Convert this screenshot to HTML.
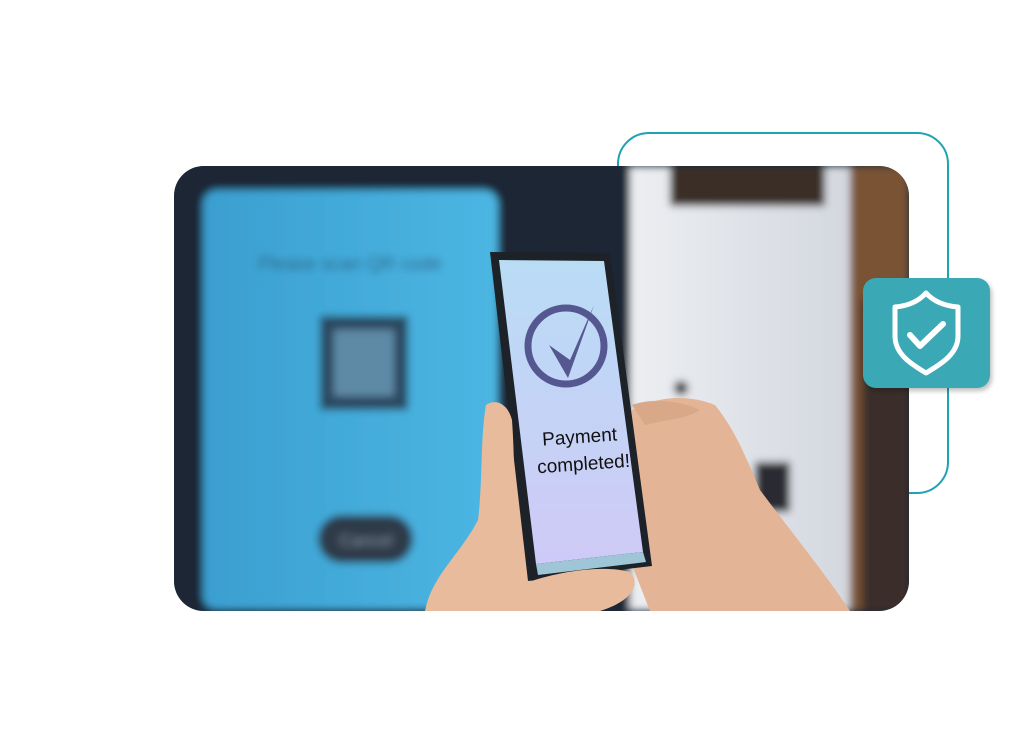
<!DOCTYPE html>
<html><head><meta charset="utf-8"><style>
html,body{margin:0;padding:0;background:#fff;width:1018px;height:743px;overflow:hidden;font-family:"Liberation Sans",sans-serif}
.outline{position:absolute;left:617px;top:132px;width:328px;height:358px;border:2px solid #1ea3b3;border-radius:32px}
.img{position:absolute;left:174px;top:166px;width:735px;height:445px;border-radius:30px;overflow:hidden}
.badge{position:absolute;left:863px;top:278px;width:127px;height:110px;background:#3aa9b5;border-radius:13px;box-shadow:2px 3px 5px rgba(0,0,0,.25)}
</style></head><body>
<div class="outline"></div>
<div class="img">
<svg width="735" height="445" viewBox="174 166 735 445" xmlns="http://www.w3.org/2000/svg">
<defs>
<filter id="b" x="-20%" y="-20%" width="140%" height="140%"><feGaussianBlur stdDeviation="4"/></filter>
<linearGradient id="scr" x1="0" y1="0" x2="0" y2="1"><stop offset="0" stop-color="#b9dcf5"/><stop offset="1" stop-color="#cfcaf7"/></linearGradient>
<linearGradient id="rt" x1="0" y1="0" x2="1" y2="0"><stop offset="0" stop-color="#eceef2"/><stop offset="1" stop-color="#d3d7de"/></linearGradient>
<linearGradient id="bl" x1="0" y1="0" x2="1" y2="0"><stop offset="0" stop-color="#3a9fd0"/><stop offset="1" stop-color="#4cb6e3"/></linearGradient>
</defs>
<rect x="174" y="166" width="735" height="445" fill="#1d2a38"/>
<g filter="url(#b)">
<rect x="174" y="166" width="460" height="445" fill="#1b2736"/>
<rect x="203" y="190" width="295" height="420" rx="14" fill="url(#bl)"/>
<text x="350" y="270" font-size="19" fill="#2a5a7a" text-anchor="middle">Please scan QR code</text>
<rect x="320" y="316" width="88" height="94" fill="#2b4a60"/>
<rect x="334" y="330" width="60" height="66" fill="#5f8aa6"/>
<rect x="318" y="515" width="95" height="48" rx="24" fill="#2d3a48"/>
<text x="366" y="546" font-size="17" fill="#7a8796" text-anchor="middle">Cancel</text>
<rect x="630" y="166" width="225" height="445" fill="url(#rt)"/>
<rect x="670" y="166" width="155" height="40" fill="#3a2e26"/>
<rect x="850" y="166" width="59" height="445" fill="#7a5234"/>
<rect x="862" y="300" width="47" height="311" fill="#3b2f2a"/>
<rect x="755" y="462" width="35" height="50" fill="#2b2c30"/>
<circle cx="681" cy="388" r="7" fill="#2b2c30"/>
</g>
<!-- right hand -->
<path d="M632 410 C660 395 690 395 715 405 C735 430 745 455 760 490 C790 530 830 580 850 611 L650 611 L630 560 Z" fill="#e3b596"/>
<!-- left hand behind -->
<path d="M486 405 C497 398 508 405 512 420 C516 470 520 520 530 580 L600 611 L425 611 C432 575 460 555 478 520 C483 480 480 440 486 405 Z" fill="#e8bb9c"/>
<!-- phone -->
<polygon points="490,252 610,253 652,566 528,581" fill="#1c2228"/>
<polygon points="499,260 604,261 643,552 536,564" fill="url(#scr)"/>
<polygon points="536,564 643,552 646,562 538,575" fill="#9fc6d6"/>
<circle cx="566" cy="346" r="38" fill="none" stroke="#555890" stroke-width="7"/>
<path d="M549 345 L568 378 L594 305 L570 360 Z" fill="#555890"/>
<text x="580" y="443" font-size="19" fill="#111" text-anchor="middle" transform="rotate(-4 580 443)">Payment</text>
<text x="584" y="470" font-size="19" fill="#111" text-anchor="middle" transform="rotate(-4 584 470)">completed!</text>
<!-- lower fingers -->
<path d="M520 585 C560 570 605 565 630 572 C642 585 630 602 600 611 L500 611 Z" fill="#e8bb9c"/>
<path d="M486 405 C497 398 508 405 512 420 C514 450 515 480 512 520 L495 520 C488 480 482 440 486 405 Z" fill="#e8bb9c"/>
<path d="M632 405 C650 398 680 400 700 410 C690 418 665 420 645 425 Z" fill="#d9a888"/>
</svg>
</div>
<div class="badge">
<svg width="127" height="110" viewBox="0 0 127 110">
<path d="M63 15 C55 24 44 28 32 29 L32 58 C32 76 48 86 63 95 C78 86 95 76 95 58 L95 29 C83 28 71 24 63 15 Z" fill="none" stroke="#fff" stroke-width="5" stroke-linejoin="round"/>
<path d="M47 57 L57 68 L80 46" fill="none" stroke="#fff" stroke-width="6" stroke-linecap="round" stroke-linejoin="round"/>
</svg>
</div>
</body></html>
